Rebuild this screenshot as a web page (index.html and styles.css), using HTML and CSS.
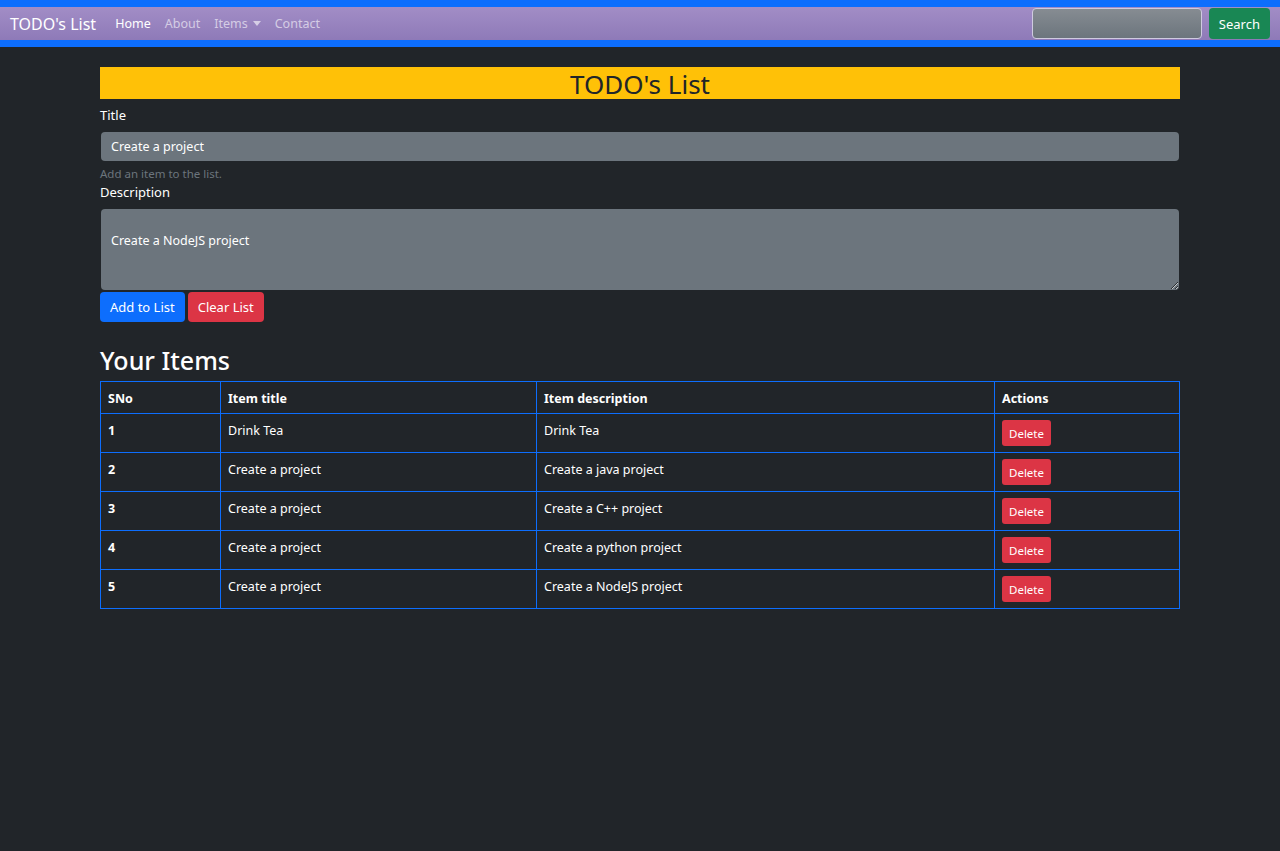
FILE: index.html
```html
<!DOCTYPE html>
<html lang="en">
<head>
<meta charset="utf-8">
<title>TODO's List</title>
<link rel="stylesheet" href="styles.css">
</head>
<body>
<nav class="navbar">
  <a class="brand" href="#">TODO's List</a>
  <ul class="nav-links">
    <li><a class="nav-link active" href="#">Home</a></li>
    <li><a class="nav-link" href="#">About</a></li>
    <li><a class="nav-link dropdown" href="#">Items <span class="caret"></span></a></li>
    <li><a class="nav-link" href="#">Contact</a></li>
  </ul>
  <form class="search">
    <input class="search-input" type="search" aria-label="Search">
    <button class="btn btn-success" type="button">Search</button>
  </form>
</nav>

<main class="container">
  <h2 class="banner">TODO's List</h2>
  <label class="form-label" for="title">Title</label>
  <input class="form-control" id="title" type="text" value="Create a project">
  <div class="form-text">Add an item to the list.</div>
  <label class="form-label desc-label" for="desc">Description</label>
  <textarea class="form-control textarea" id="desc">Create a NodeJS project</textarea>
  <div class="actions">
    <button class="btn btn-primary" type="button">Add to List</button>
    <button class="btn btn-danger" type="button">Clear List</button>
  </div>

  <h3 class="section-title">Your Items</h3>
  <table class="items">
    <colgroup>
      <col class="c1"><col class="c2"><col class="c3"><col class="c4">
    </colgroup>
    <thead>
      <tr><th>SNo</th><th>Item title</th><th>Item description</th><th>Actions</th></tr>
    </thead>
    <tbody>
      <tr><th>1</th><td>Drink Tea</td><td>Drink Tea</td><td><button class="btn btn-sm btn-danger" type="button">Delete</button></td></tr>
      <tr><th>2</th><td>Create a project</td><td>Create a java project</td><td><button class="btn btn-sm btn-danger" type="button">Delete</button></td></tr>
      <tr><th>3</th><td>Create a project</td><td>Create a C++ project</td><td><button class="btn btn-sm btn-danger" type="button">Delete</button></td></tr>
      <tr><th>4</th><td>Create a project</td><td>Create a python project</td><td><button class="btn btn-sm btn-danger" type="button">Delete</button></td></tr>
      <tr><th>5</th><td>Create a project</td><td>Create a NodeJS project</td><td><button class="btn btn-sm btn-danger" type="button">Delete</button></td></tr>
    </tbody>
  </table>
</main>
</body>
</html>
```

FILE: styles.css
```css
* { box-sizing: border-box; }

body {
  margin: 0;
  background: #212529;
  color: #fff;
  font-family: "Noto Sans", "Open Sans", sans-serif;
  font-size: 13px;
}

.navbar {
  display: flex;
  align-items: center;
  height: 47px;
  padding: 0 10px;
  border-top: 7px solid #0d6efd;
  border-bottom: 7px solid #0d6efd;
  background: linear-gradient(#a28dc6, #8e7ab8);
}

.brand {
  color: #fff;
  text-decoration: none;
  font-size: 16px;
  margin-right: 12px;
}

.nav-links {
  display: flex;
  list-style: none;
  margin: 0;
  padding: 0;
  flex: 1;
}

.nav-link {
  display: flex;
  align-items: center;
  padding: 0 7px;
  color: rgba(255, 255, 255, 0.6);
  text-decoration: none;
  font-size: 12.5px;
}

.nav-link.active { color: #fff; }

.caret {
  display: inline-block;
  margin-left: 5px;
  border-top: 5px solid rgba(255, 255, 255, 0.6);
  border-left: 4px solid transparent;
  border-right: 4px solid transparent;
}

.search {
  display: flex;
  gap: 7px;
}

.search-input {
  width: 170px;
  height: 31px;
  border: 1px solid #cfcbe0;
  border-radius: 4px;
  background: linear-gradient(#868c92, #6c757d);
}

.btn {
  border: none;
  border-radius: 4px;
  color: #fff;
  font-family: inherit;
  font-size: 13px;
  padding: 0 10px;
  height: 30px;
  cursor: pointer;
}

.search .btn {
  height: 31px;
  padding: 0 10px;
}

.btn-success { background: #198754; }
.btn-primary { background: #0d6efd; }
.btn-danger { background: #dc3545; }

.container {
  width: 1080px;
  margin: 20px auto 0;
}

.banner {
  margin: 0;
  height: 32px;
  line-height: 34px;
  background: #ffc107;
  color: #212529;
  text-align: center;
  font-size: 26px;
  font-weight: 400;
}

.form-label {
  display: block;
  margin: 6px 0 7px;
  line-height: 20px;
  font-size: 13px;
}

.desc-label { margin-top: 0; }

.form-control {
  display: block;
  width: 1078px;
  margin-left: 1px;
  height: 29px;
  padding: 0 10px;
  border: none;
  border-radius: 4px;
  background: #6c757d;
  color: #fff;
  font-family: inherit;
  font-size: 12.5px;
}

.form-text {
  margin-top: 4px;
  line-height: 17px;
  font-size: 11.5px;
  color: #6c757d;
}

.textarea {
  height: 81px;
  padding: 22px 10px 0;
  resize: vertical;
  line-height: 20px;
}

.actions {
  display: flex;
  gap: 3px;
  margin-top: 2px;
}

.section-title {
  margin: 23px 0 5px;
  line-height: 31px;
  font-size: 25px;
  font-weight: 500;
}

.items {
  width: 1079px;
  border-collapse: collapse;
  table-layout: fixed;
}

.c1 { width: 120px; }
.c2 { width: 316px; }
.c3 { width: 458px; }
.c4 { width: 185px; }

.items th,
.items td {
  border: 1px solid #0d6efd;
  padding: 7px 7px 5px;
  line-height: 19px;
  text-align: left;
  vertical-align: top;
  font-size: 12.5px;
}

.items th { font-weight: 700; }
.items td { font-weight: 400; }

.items tbody tr { height: 39px; }

.btn-sm {
  display: block;
  height: 26px;
  margin-top: -1px;
  padding: 0 7px;
  font-size: 11.5px;
  border-radius: 3px;
}
```
